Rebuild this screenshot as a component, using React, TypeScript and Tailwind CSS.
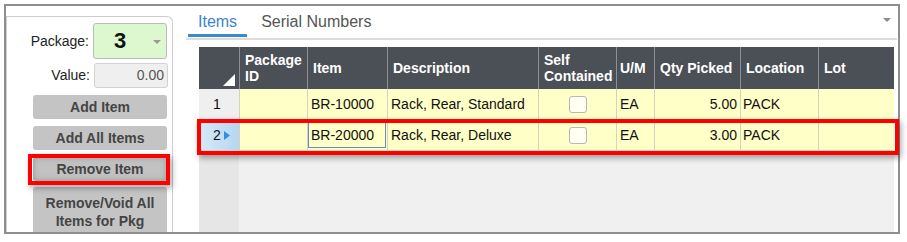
import React from "react";

const cols = [
  { key: "num", w: 40 },
  { key: "pkg", w: 68, label: "Package ID" },
  { key: "item", w: 80, label: "Item" },
  { key: "desc", w: 151, label: "Description" },
  { key: "self", w: 78, label: "Self Contained" },
  { key: "um", w: 38, label: "U/M" },
  { key: "qty", w: 86, label: "Qty Picked" },
  { key: "loc", w: 78, label: "Location" },
  { key: "lot", w: 76, label: "Lot" },
];

const rows = [
  { n: "1", item: "BR-10000", desc: "Rack, Rear, Standard", um: "EA", qty: "5.00", loc: "PACK", sel: false },
  { n: "2", item: "BR-20000", desc: "Rack, Rear, Deluxe", um: "EA", qty: "3.00", loc: "PACK", sel: true },
];

function Btn({ children, h = "h-[24px]" }: { children: React.ReactNode; h?: string }) {
  return (
    <div
      className={`w-[134px] ${h} rounded-[3px] bg-[#c4c4c4] flex items-center justify-center text-center text-[14px] leading-[18px] font-bold text-[#454545]`}
    >
      {children}
    </div>
  );
}

function Checkbox() {
  return <div className="w-[18px] h-[17px] rounded-[3px] border border-[#b8b8b8] bg-[#fffff4]" />;
}

export default function App() {
  return (
    <div className="relative w-[907px] h-[242px] bg-white font-['Liberation_Sans',Arial,sans-serif] overflow-hidden">
      <div className="ml-[4px] mt-[4px] w-[896px] h-[230px] border-2 border-[#8e8e8e] flex overflow-hidden">
        {/* Left panel */}
        <div className="w-[167px] shrink-0 mt-[10px] border-t border-l border-r border-[#cdcdcd] rounded-tr-[6px] flex flex-col items-end pr-[5px] pt-[6px]">
          <div className="flex items-center gap-[4px]">
            <span className="text-[14px] text-[#222]">Package:</span>
            <div className="relative w-[74px] h-[36px] rounded-[3px] border border-[#bcbcbc] bg-[#ddf8cf] flex items-center">
              <span className="ml-[20px] text-[22px] font-bold text-[#111] leading-none">3</span>
              <div className="absolute left-[59px] top-[16px] w-0 h-0 border-l-[4px] border-r-[4px] border-t-[4px] border-l-transparent border-r-transparent border-t-[#9a9a9a]" />
            </div>
          </div>
          <div className="flex items-center gap-[4px] mt-[4px] mr-[-1px]">
            <span className="text-[14px] text-[#222]">Value:</span>
            <div className="w-[74px] h-[25px] rounded-[3px] border border-[#d2d2d2] bg-[#efefef] flex items-center justify-end pr-[3px] text-[14px] text-[#555]">
              0.00
            </div>
          </div>
          <div className="mt-[7px] flex flex-col gap-[7px]">
            <Btn>Add Item</Btn>
            <Btn>Add All Items</Btn>
            <div className="w-[134px] h-[24px] rounded-[3px] bg-[#c2c2c2] flex items-center justify-center text-[14px] font-bold text-[#454545] shadow-[inset_0_0_6px_rgba(0,0,0,0.25)]">
              Remove Item
            </div>
            <Btn h="h-[50px] -mt-[1px]">
              Remove/Void All
              <br />
              Items for Pkg
            </Btn>
          </div>
        </div>

        {/* Right area */}
        <div className="flex-1 flex flex-col pl-[13px] pr-[1px]">
          <div className="relative h-[31px] flex items-end">
            <div className="ml-[2px] h-[31px] px-[10px] border-b-[3px] border-[#3b8bcc] flex items-start pt-[7px]">
              <span className="text-[16px] leading-[18px] text-[#3a86c8]">Items</span>
            </div>
            <div className="h-[31px] px-[14px] flex items-start pt-[7px]">
              <span className="text-[16px] leading-[18px] text-[#555]">Serial Numbers</span>
            </div>
            <div className="absolute right-[6px] top-[12px] w-0 h-0 border-l-[4px] border-r-[4px] border-t-[4px] border-l-transparent border-r-transparent border-t-[#8a8a8a]" />
          </div>
          <div className="mt-[1px] h-[2px] bg-[#dcdcdc]" />

          {/* Grid */}
          <div className="ml-[13px] mt-[7px] w-[695px] flex-1 flex flex-col bg-[#f0f0f0]">
            {/* header */}
            <div className="flex h-[42px] bg-[#4b4f56] text-white text-[14px] font-bold leading-[16px]">
              {cols.map((c, i) => (
                <div
                  key={c.key}
                  style={{ width: c.w }}
                  className={`relative shrink-0 flex items-center ${i > 0 ? "border-l border-[#8d9096]" : ""} ${
                    c.key === "um" ? "pl-[3px]" : "pl-[5px]"
                  }`}
                >
                  {c.key === "num" ? (
                    <svg className="absolute right-[4px] bottom-[3px]" width="12" height="12" viewBox="0 0 12 12">
                      <polygon points="12,0 12,12 0,12" fill="#ffffff" />
                    </svg>
                  ) : (
                    <span className="whitespace-pre-line">
                      {c.label === "Package ID" ? "Package\nID" : c.label === "Self Contained" ? "Self\nContained" : c.label}
                    </span>
                  )}
                </div>
              ))}
            </div>
            {/* rows */}
            {rows.map((r) => (
              <div key={r.n} className="flex h-[31px] text-[14px] text-[#111] border-b border-[#d6d6c4]">
                <div
                  className={`w-[40px] shrink-0 flex items-center justify-center pl-[5px] ${
                    r.sel ? "bg-gradient-to-r from-[#d6eaf8] to-[#b5d7f1]" : "bg-[#efefef]"
                  }`}
                >
                  <span>{r.n}</span>
                  {r.sel ? (
                    <svg className="ml-[3px]" width="6" height="9" viewBox="0 0 6 9">
                      <polygon points="0,0 6,4.5 0,9" fill="#2f8fe4" />
                    </svg>
                  ) : (
                    <span className="w-[9px]" />
                  )}
                </div>
                <div className="w-[68px] shrink-0 bg-[#ffffc8] border-l border-[#d3d3c0]" />
                <div className="w-[80px] shrink-0 bg-[#ffffc8] border-l border-[#d3d3c0] flex items-center">
                  {r.sel ? (
                    <div className="w-[78px] h-[26px] border border-[#6a8cc4] flex items-center pl-[2px]">{r.item}</div>
                  ) : (
                    <span className="pl-[3px]">{r.item}</span>
                  )}
                </div>
                <div className="w-[151px] shrink-0 bg-[#ffffc8] border-l border-[#d3d3c0] flex items-center pl-[3px]">
                  {r.desc}
                </div>
                <div className="w-[78px] shrink-0 bg-[#ffffc8] border-l border-[#d3d3c0] flex items-center justify-center">
                  <Checkbox />
                </div>
                <div className="w-[38px] shrink-0 bg-[#ffffc8] border-l border-[#d3d3c0] flex items-center pl-[3px]">
                  {r.um}
                </div>
                <div className="w-[86px] shrink-0 bg-[#ffffc8] border-l border-[#d3d3c0] flex items-center justify-end pr-[3px]">
                  {r.qty}
                </div>
                <div className="w-[78px] shrink-0 bg-[#ffffc8] border-l border-[#d3d3c0] flex items-center pl-[2px]">
                  {r.loc}
                </div>
                <div className="w-[76px] shrink-0 bg-[#ffffc8] border-l border-[#d3d3c0]" />
              </div>
            ))}
            <div className="flex-1 flex">
              <div className="w-[40px] bg-[#e6e6e6]" />
            </div>
          </div>
        </div>
      </div>

      {/* Annotation overlays */}
      <div className="absolute left-[197px] top-[119px] w-[702px] h-[36px] border-4 border-[#ff0000] shadow-[2px_3px_6px_rgba(0,0,0,0.35)]" />
      <div className="absolute left-[28px] top-[154px] w-[142px] h-[31px] border-4 border-[#ff0000] shadow-[2px_3px_6px_rgba(0,0,0,0.35)]" />
    </div>
  );
}
